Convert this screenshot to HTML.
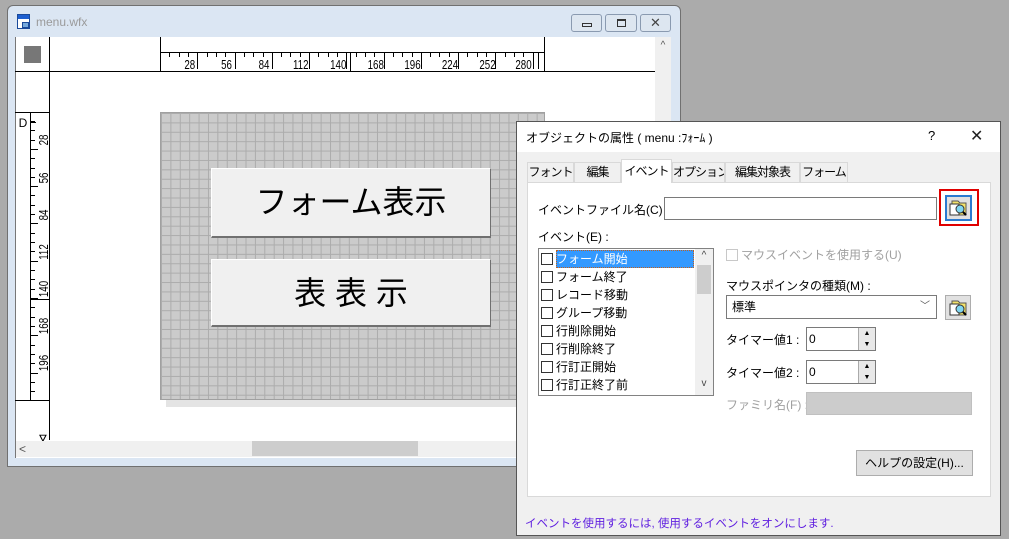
<!DOCTYPE html>
<html><head><meta charset="utf-8"><style>
*{margin:0;padding:0;box-sizing:border-box}
body{width:1009px;height:539px;background:#ababab;position:relative;overflow:hidden;font-family:"Liberation Sans","Noto Sans CJK JP",sans-serif;font-size:12px;color:#000}
.a{position:absolute}
.grid{background-color:#cbcbcb;background-image:linear-gradient(#acacac 1px,transparent 1px),linear-gradient(90deg,#acacac 1px,transparent 1px);background-size:9.4px 9.4px}
.btn{background:#f0f0f0;border:1px solid #fff;border-right-color:#707070;border-bottom:2px solid #707070;font-size:32px;text-align:center}
.tab{position:absolute;top:162px;height:20px;border:1px solid #d9d9d9;border-bottom:none;background:#f0f0f0;font-size:12px;line-height:19px;text-align:center;white-space:nowrap;letter-spacing:-1px;overflow:hidden}
.row{position:absolute;left:541px;height:18px;font-size:12px;line-height:18px;white-space:nowrap}
.cb{display:inline-block;width:12px;height:12px;border:1px solid #333;vertical-align:-2px;margin-right:3px;background:#fff}
</style></head><body>
<!-- window -->
<div class="a" style="left:7px;top:5px;width:674px;height:462px;background:#dbe6f3;border:1px solid #707070;border-radius:6px 6px 0 0"></div>
<div class="a" style="left:17px;top:14px;width:13px;height:15px;border:1px solid #1a4a9a;background:linear-gradient(#1d5fd0 4px,#fff 4px)"></div>
<div class="a" style="left:22px;top:22px;width:7px;height:6px;border:1px solid #1a4a9a;background:#7ad"></div>
<div class="a" style="left:36px;top:15px;color:#9a9a9a;font-size:12px">menu.wfx</div>
<div class="a" style="left:571px;top:14px;width:31px;height:18px;border:1px solid #8a9ab0;border-radius:3px;background:#dde6f0"><div class="a" style="left:10px;top:8px;width:10px;height:4px;border:1px solid #333"></div></div>
<div class="a" style="left:605px;top:14px;width:32px;height:18px;border:1px solid #8a9ab0;border-radius:3px;background:#dde6f0"><div class="a" style="left:11px;top:4px;width:9px;height:8px;border:1px solid #333;border-top-width:2px"></div></div>
<div class="a" style="left:640px;top:14px;width:31px;height:18px;border:1px solid #8a9ab0;border-radius:3px;background:#dde6f0;text-align:center;font-size:13px;line-height:16px;color:#444">✕</div>
<div class="a" style="left:15px;top:37px;width:656px;height:421px;background:#fff;border-left:1px solid #777"></div>
<div class="a" style="left:24px;top:46px;width:17px;height:17px;background:#777"></div>
<svg class="a" style="left:0;top:0" width="680" height="470">
<g stroke="#000" stroke-width="1" fill="none" shape-rendering="crispEdges">
<line x1="15" y1="71.5" x2="655" y2="71.5"/>
<line x1="49.5" y1="37" x2="49.5" y2="440"/>
<line x1="160.5" y1="37" x2="160.5" y2="71"/>
<line x1="544.5" y1="37" x2="544.5" y2="71"/>
<line x1="160" y1="52.5" x2="545" y2="52.5"/>
<line x1="350.5" y1="52" x2="350.5" y2="71"/>
<line x1="15" y1="112.5" x2="50" y2="112.5"/>
<line x1="15" y1="400.5" x2="50" y2="400.5"/>
<line x1="30.5" y1="112" x2="30.5" y2="400"/>
<line x1="30" y1="299.5" x2="50" y2="299.5"/>
<path d="M169.5 52v5M179.5 52v5M188.5 52v5M197.5 52v17M207.5 52v5M216.5 52v5M225.5 52v5M235.5 52v17M244.5 52v5M253.5 52v5M263.5 52v5M272.5 52v17M281.5 52v5M290.5 52v5M300.5 52v5M309.5 52v17M318.5 52v5M328.5 52v5M337.5 52v5M346.5 52v17M356.5 52v5M365.5 52v5M374.5 52v5M384.5 52v17M393.5 52v5M402.5 52v5M412.5 52v5M421.5 52v17M430.5 52v5M439.5 52v5M449.5 52v5M458.5 52v17M467.5 52v5M477.5 52v5M486.5 52v5M495.5 52v17M505.5 52v5M514.5 52v5M523.5 52v5M533.5 52v17M538.5 52v17"/>
<path d="M30 121.5h5M30 130.5h5M30 140.5h5M30 149.5h8M30 158.5h5M30 168.5h5M30 177.5h5M30 186.5h8M30 195.5h5M30 205.5h5M30 214.5h5M30 223.5h8M30 233.5h5M30 242.5h5M30 251.5h5M30 261.5h8M30 270.5h5M30 279.5h5M30 289.5h5M30 298.5h8M30 307.5h5M30 317.5h5M30 326.5h5M30 335.5h8M30 345.5h5M30 354.5h5M30 363.5h5M30 373.5h8M30 382.5h5M30 391.5h5"/>
<line x1="30" y1="122.5" x2="36" y2="122.5"/>
</g>
<g font-family="Liberation Sans" font-size="13" fill="#000" text-anchor="middle" transform="scale(0.75,1)">
<text x="253" y="69">28</text><text x="302" y="69">56</text><text x="352" y="69">84</text><text x="401" y="69">112</text><text x="451" y="69">140</text><text x="501" y="69">168</text><text x="550" y="69">196</text><text x="600" y="69">224</text><text x="650" y="69">252</text><text x="698" y="69">280</text>
</g>
<g font-family="Liberation Sans" font-size="13" fill="#000" text-anchor="middle">
<text transform="translate(48,140) rotate(-90) scale(0.75,1)">28</text>
<text transform="translate(48,178) rotate(-90) scale(0.75,1)">56</text>
<text transform="translate(48,215) rotate(-90) scale(0.75,1)">84</text>
<text transform="translate(48,252) rotate(-90) scale(0.75,1)">112</text>
<text transform="translate(48,289) rotate(-90) scale(0.75,1)">140</text>
<text transform="translate(48,326) rotate(-90) scale(0.75,1)">168</text>
<text transform="translate(48,363) rotate(-90) scale(0.75,1)">196</text>
<text transform="translate(47,438) rotate(-90) scale(0.8,1)">⊲</text>
<text x="23" y="127" font-size="12">D</text>
</g>
</svg>
<div class="a" style="left:166px;top:400px;width:380px;height:7px;background:#e4e4e4"></div>
<div class="a grid" style="left:160px;top:112px;width:385px;height:288px;border:1px solid #a0a0a0"></div>
<div class="a btn" style="left:211px;top:168px;width:280px;height:70px;line-height:66px">フォーム表示</div>
<div class="a btn" style="left:211px;top:259px;width:280px;height:68px;line-height:66px">表&nbsp;表&nbsp;示</div>
<div class="a" style="left:655px;top:37px;width:16px;height:404px;background:#f0f0f0"></div>
<div class="a" style="left:655px;top:40px;width:16px;text-align:center;font-size:10px;color:#555">^</div>
<div class="a" style="left:16px;top:441px;width:639px;height:16px;background:#f0f0f0"></div>
<div class="a" style="left:252px;top:441px;width:166px;height:15px;background:#cdcdcd"></div>
<div class="a" style="left:19px;top:441px;font-size:12px;color:#555;line-height:16px">&lt;</div>

<!-- dialog -->
<div class="a" style="left:516px;top:121px;width:485px;height:415px;background:#f0f0f0;border:1px solid #555"></div>
<div class="a" style="left:517px;top:122px;width:483px;height:30px;background:#fff"></div>
<div class="a" style="left:526px;top:129px;font-size:12px">オブジェクトの属性 ( menu :ﾌｫｰﾑ )</div>
<div class="a" style="left:928px;top:128px;font-size:13px">?</div>
<div class="a" style="left:970px;top:126px;font-size:16px;color:#222">✕</div>
<div class="a" style="left:527px;top:182px;width:464px;height:315px;background:#fff;border:1px solid #d9d9d9"></div>
<div class="tab" style="left:527px;width:47px">フォント</div>
<div class="tab" style="left:574px;width:47px">編集</div>
<div class="tab" style="left:621px;top:159px;height:24px;width:51px;background:#fff;line-height:22px;z-index:2">イベント</div>
<div class="tab" style="left:672px;width:53px">オプション</div>
<div class="tab" style="left:725px;width:75px">編集対象表</div>
<div class="tab" style="left:800px;width:48px">フォーム</div>
<div class="a" style="left:538px;top:201px;white-space:nowrap">イベントファイル名(C) :</div>
<div class="a" style="left:664px;top:197px;width:273px;height:23px;border:1px solid #7a7a7a;background:#fff"></div>
<div class="a" style="left:939px;top:189px;width:40px;height:37px;border:2px solid #e00000"></div>
<div class="a" style="left:945px;top:195px;width:27px;height:26px;border:2px solid #2a7ad0;background:#e1e1e1"></div>
<svg class="a" style="left:948px;top:198px" width="20" height="20"><path d="M4 3h6l2 2h6v12H4z" fill="#f3e36a" stroke="#555"/><rect x="2" y="6" width="9" height="11" fill="#fff" stroke="#333"/><circle cx="12" cy="11" r="4" fill="#7fd6f0" stroke="#333"/><path d="M15 14l3 3" stroke="#000" stroke-width="2"/></svg>
<div class="a" style="left:538px;top:228px">イベント(E) :</div>
<div class="a" style="left:538px;top:248px;width:176px;height:148px;border:1px solid #828282;background:#fff"></div>
<div class="a" style="left:556px;top:250px;width:138px;height:18px;background:#3399ff;border:1px dotted #c06020"></div>
<div class="a" style="left:695px;top:249px;width:18px;height:146px;background:#f0f0f0"></div>
<div class="a" style="left:697px;top:265px;width:14px;height:29px;background:#cdcdcd"></div>
<div class="a" style="left:695px;top:250px;width:18px;text-align:center;font-size:10px;color:#444">^</div>
<div class="a" style="left:695px;top:378px;width:18px;text-align:center;font-size:10px;color:#444">v</div>
<div class="row" style="top:250px"><span class="cb"></span><span style="color:#fff">フォーム開始</span></div>
<div class="row" style="top:268px"><span class="cb"></span>フォーム終了</div>
<div class="row" style="top:286px"><span class="cb"></span>レコード移動</div>
<div class="row" style="top:304px"><span class="cb"></span>グループ移動</div>
<div class="row" style="top:322px"><span class="cb"></span>行削除開始</div>
<div class="row" style="top:340px"><span class="cb"></span>行削除終了</div>
<div class="row" style="top:358px"><span class="cb"></span>行訂正開始</div>
<div class="row" style="top:376px"><span class="cb"></span>行訂正終了前</div>
<div class="a" style="left:726px;top:246px;color:#a0a0a0;white-space:nowrap"><span class="cb" style="border-color:#c8c8c8"></span>マウスイベントを使用する(U)</div>
<div class="a" style="left:726px;top:277px">マウスポインタの種類(M) :</div>
<div class="a" style="left:726px;top:295px;width:211px;height:24px;border:1px solid #7a7a7a;background:#fff;padding-left:5px;line-height:22px">標準<span style="position:absolute;right:6px;color:#555;font-size:10px">﹀</span></div>
<div class="a" style="left:945px;top:295px;width:26px;height:25px;border:1px solid #adadad;background:#e1e1e1"></div>
<svg class="a" style="left:948px;top:298px" width="20" height="20"><path d="M4 3h6l2 2h6v12H4z" fill="#f3e36a" stroke="#555"/><rect x="2" y="6" width="9" height="11" fill="#fff" stroke="#333"/><circle cx="12" cy="11" r="4" fill="#7fd6f0" stroke="#333"/><path d="M15 14l3 3" stroke="#000" stroke-width="2"/></svg>
<div class="a" style="left:726px;top:331px">タイマー値1 :</div>
<div class="a" style="left:806px;top:327px;width:70px;height:24px;border:1px solid #7a7a7a;background:#fff;padding-left:2px;line-height:22px">0</div>
<div class="a" style="left:858px;top:328px;width:17px;height:22px;background:#e8e8e8;border-left:1px solid #aaa;font-size:7px;line-height:11px;text-align:center">▲<br>▼</div>
<div class="a" style="left:726px;top:364px">タイマー値2 :</div>
<div class="a" style="left:806px;top:360px;width:70px;height:24px;border:1px solid #7a7a7a;background:#fff;padding-left:2px;line-height:22px">0</div>
<div class="a" style="left:858px;top:361px;width:17px;height:22px;background:#e8e8e8;border-left:1px solid #aaa;font-size:7px;line-height:11px;text-align:center">▲<br>▼</div>
<div class="a" style="left:726px;top:396px;color:#a0a0a0">ファミリ名(F) :</div>
<div class="a" style="left:806px;top:392px;width:166px;height:23px;background:#cccccc;border:1px solid #c0c0c0"></div>
<div class="a" style="left:856px;top:450px;width:117px;height:26px;border:1px solid #adadad;background:#e1e1e1;text-align:center;line-height:24px">ヘルプの設定(H)...</div>
<div class="a" style="left:525px;top:515px;color:#6020e0;font-size:11.5px">イベントを使用するには, 使用するイベントをオンにします.</div>
</body></html>
